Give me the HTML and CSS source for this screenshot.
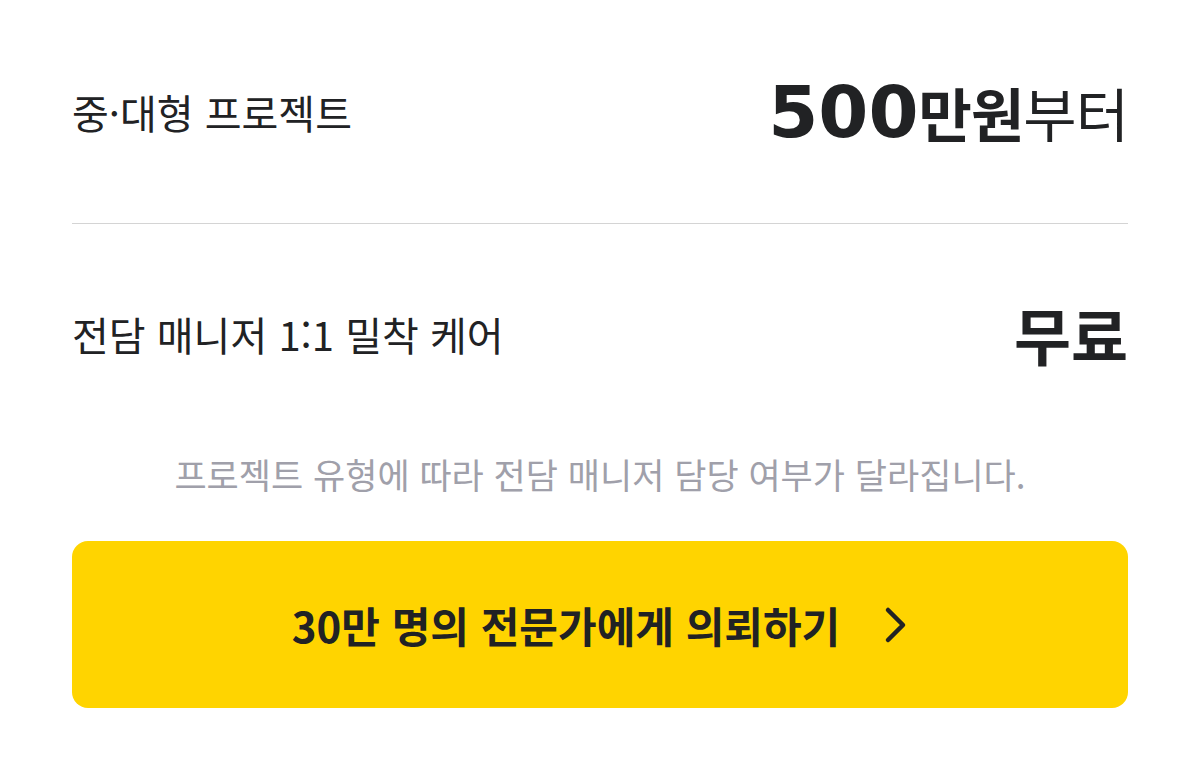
FILE: index.html
```html
<!DOCTYPE html>
<html lang="ko">

<head>
    <meta charset="UTF-8">
    <meta name="viewport" content="width=device-width, initial-scale=1.0">
    <title>전문가 의뢰</title>
    <link rel="stylesheet" href="styles.css">
</head>

<body>
    <div class="price-card">
        <div class="price-row first">
            <span class="label">중·대형 프로젝트</span>
            <span class="value"><b class="num">500</b><b>만원</b>부터</span>
        </div>
        <div class="price-row second">
            <span class="label">전담 매니저 1:1 밀착 케어</span>
            <span class="value free"><b>무료</b></span>
        </div>
        <p class="note">프로젝트 유형에 따라 전담 매니저 담당 여부가 달라집니다.</p>
        <button class="cta">
            <span>30만 명의 전문가에게 의뢰하기</span>
            <svg width="24" height="38" viewBox="0 0 24 38" fill="none">
                <path d="M4 4 L19 19 L4 34" stroke="#212224" stroke-width="4.5" stroke-linecap="round" stroke-linejoin="round" />
            </svg>
        </button>
    </div>
</body>

</html>
```

FILE: styles.css
```css
body {
    margin: 0;
    background-color: #fff;
    font-family: "Noto Sans CJK KR", "Noto Sans", sans-serif;
    color: #212224;
}

.price-card {
    padding: 0 72px;
}

.price-row {
    display: flex;
    justify-content: space-between;
    align-items: center;
}

.price-row.first {
    height: 223px;
    border-bottom: 1px solid #d4d4d4;
}

.price-row.second {
    height: 219px;
}

.label {
    font-size: 40px;
}

.value {
    font-size: 58px;
    letter-spacing: -1px;
    line-height: 1;
}

.value b {
    font-weight: 700;
}

.value .num {
    font-family: "DejaVu Sans", sans-serif;
    font-size: 72px;
    letter-spacing: 0;
}

.value.free {
    font-size: 62px;
    letter-spacing: 0;
}

.note {
    margin: 10px 0 0;
    text-align: center;
    font-size: 35px;
    line-height: 42px;
    color: #a0a0aa;
}

.cta {
    display: flex;
    justify-content: center;
    align-items: center;
    gap: 44px;
    width: 100%;
    height: 167px;
    margin-top: 46px;
    border: none;
    border-radius: 16px;
    background-color: #ffd400;
    font-family: "Noto Sans CJK KR", "Noto Sans", sans-serif;
    font-size: 42px;
    font-weight: 700;
    color: #212224;
    cursor: pointer;
}
```
